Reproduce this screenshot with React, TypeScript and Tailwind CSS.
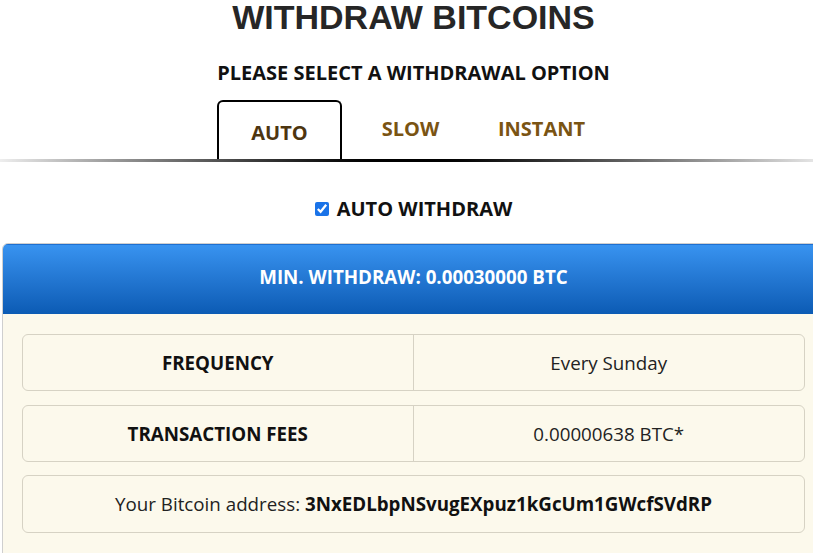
import React from "react";

const TABS = ["AUTO", "SLOW", "INSTANT"];

const ROWS: [string, string][] = [
  ["FREQUENCY", "Every Sunday"],
  ["TRANSACTION FEES", "0.00000638 BTC*"],
];

export default function App() {
  return (
    <div
      className="w-[813px] h-[553px] overflow-hidden bg-white"
      style={{ fontFamily: "'Open Sans', sans-serif" }}
    >
      <div className="w-[823px] ml-[2px]">
        <h1
          className="text-center text-[34px] font-bold leading-none text-[#262626]"
          style={{ fontFamily: "'Liberation Sans', Arial, sans-serif" }}
        >
          WITHDRAW BITCOINS
        </h1>

        <p className="mt-[26px] text-center text-[20px] font-bold leading-[26px] text-[#111]">
          PLEASE SELECT A WITHDRAWAL OPTION
        </p>

        <div className="mt-[14px] flex justify-center gap-[6px] pr-[6px]">
          {TABS.map((tab, i) => (
            <div
              key={tab}
              className={
                i === 0
                  ? "relative z-10 -mb-[2px] flex h-[59px] w-[125px] items-center justify-center rounded-t-[6px] border-2 border-b-0 border-black bg-white pt-[4px] text-[20px] font-bold text-[#4d3510]"
                  : "flex h-[59px] w-[125px] items-center justify-center pb-[1px] text-[20px] font-bold text-[#7a5413]"
              }
            >
              {tab}
            </div>
          ))}
        </div>
      </div>
      <div className="h-[3px] w-[813px] bg-linear-to-r from-[#eeeeee] via-black to-[#e4e4e4]" />

      <div className="w-[823px] ml-[2px]">
        <label className="mt-[34px] flex items-center justify-center gap-[8px] text-[20px] font-bold leading-[26px] text-[#111]">
          <input
            type="checkbox"
            defaultChecked
            className="h-[14px] w-[14px] accent-[#1a73e8]"
          />
          AUTO WITHDRAW
        </label>

        <div className="mt-[21px] overflow-hidden rounded-t-[6px] border border-[#cfcfcf] bg-[#fcf9ec]">
          <div className="flex h-[70px] items-center justify-center border-t border-[#1e6fd0] bg-linear-to-b from-[#3893f0] to-[#0b5bb4] pb-[4px] text-[18.75px] font-bold text-white">
            MIN. WITHDRAW: 0.00030000 BTC
          </div>

          <div className="flex flex-col gap-[14px] px-[19px] pt-[20px] pb-[20px]">
            {ROWS.map(([label, value]) => (
              <div
                key={label}
                className="grid h-[57px] grid-cols-2 rounded-[6px] border border-[#d6d2c4] text-[18.75px] text-[#111]"
              >
                <div className="flex items-center justify-center border-r border-[#d6d2c4] pt-[1px] font-bold">
                  {label}
                </div>
                <div className="flex items-center justify-center pt-[1px] text-[#222]">
                  {value}
                </div>
              </div>
            ))}
            <div className="-mt-[1px] flex h-[58px] items-center justify-center rounded-[6px] border border-[#d6d2c4] text-[18.75px] text-[#222]">
              Your Bitcoin address:&nbsp;
              <span className="font-bold text-[#111]">
                3NxEDLbpNSvugEXpuz1kGcUm1GWcfSVdRP
              </span>
            </div>
          </div>
        </div>
      </div>
    </div>
  );
}
